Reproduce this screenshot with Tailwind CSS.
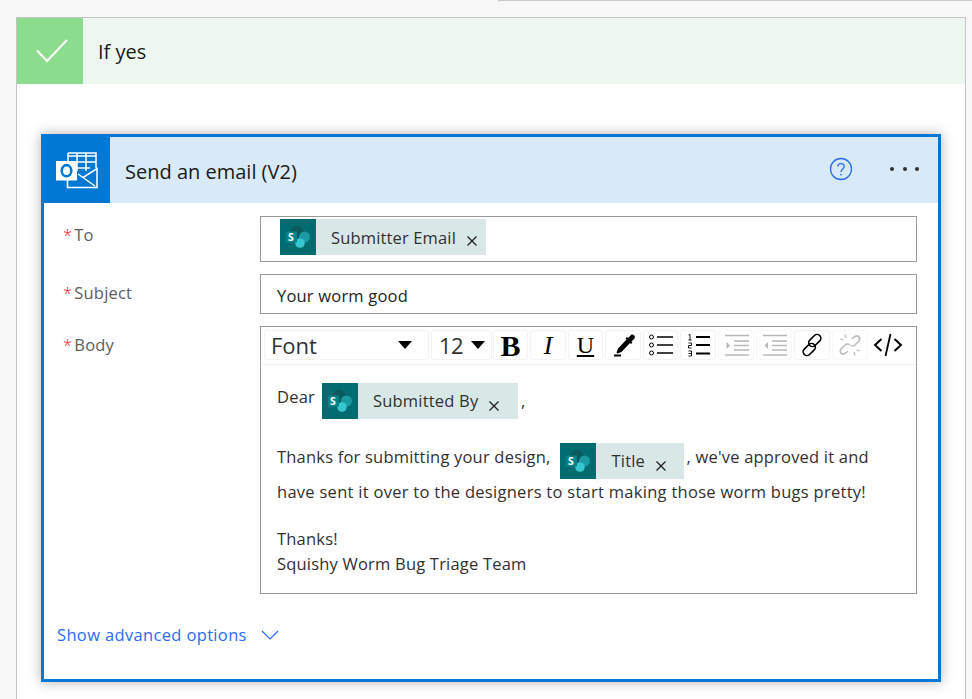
<!DOCTYPE html>
<html lang="en">
<head>
<meta charset="UTF-8">
<title>Send an email</title>
<script src="https://cdn.jsdelivr.net/npm/@tailwindcss/browser@4"></script>
</head>
<body class="bg-[#f8f8f8] font-['Open_Sans',sans-serif] text-[#323130] overflow-hidden">
<div class="h-[699px] w-[972px] overflow-hidden">
  <!-- top edge of the previous card -->
  <div class="ml-[498px] h-[2px] border-t border-l border-[#c8c8c8]"></div>
  <!-- If yes branch -->
  <section class="mt-[15px] ml-[16px] w-[950px] h-[690px] bg-white border border-[#c4c4c4]">
    <div class="flex h-[66px] bg-[#edf7ef]">
      <div class="w-[66px] bg-[#8bdc8d] flex items-center justify-center">
        <svg class="ml-[3px]" width="32" height="24" viewBox="0 0 32 24" fill="none" stroke="#fff" stroke-width="2.2"><path d="M1 11.500 L11 22 L31 1"/></svg>
      </div>
      <div class="pl-[15px] pt-[21px] text-[20px] leading-[26px] text-[#1b1a19]">If yes</div>
    </div>
    <!-- Action card -->
    <div class="mt-[50px] ml-[24px] w-[900px] h-[548px] border-[3px] border-[#0078d4] shadow-[0_0_12px_rgba(0,0,0,0.3)] bg-white">
      <div class="flex h-[66px] bg-[#d8e9f8] items-center">
        <div class="w-[66px] h-[66px] bg-[#0078d4] flex items-center justify-center">
          <svg width="42" height="37" viewBox="0 0 42 37" fill="none">
            <path d="M12 1 H40 V16 M21 1 V19 M30 1 V19 M12 1 V9 M12 4 H40 M21 10 H40 M21 16 H34" stroke="#fff" stroke-width="1.5"/>
            <path d="M11.500 28 V35.500 H41 V16.500 L27 25.500" stroke="#fff" stroke-width="1.500"/>
            <path d="M22 22 L39 34" stroke="#fff" stroke-width="1.500"/>
            <rect x="0" y="9" width="21" height="19.500" fill="#fff"/>
            <ellipse cx="10.500" cy="18.700" rx="4.800" ry="5.600" fill="none" stroke="#0078d4" stroke-width="2.600"/>
          </svg>
        </div>
        <div class="ml-[15px] mt-[3px] text-[20px] leading-[28px] text-[#1b1a19]">Send an email (V2)</div>
        <svg class="ml-auto -mt-[2px]" width="24" height="24" viewBox="0 0 24 24" fill="none">
          <circle cx="12" cy="12" r="10.500" stroke="#2a6df4" stroke-width="1.300"/>
          <path d="M8.800 9.400 C8.800 5.600 15.200 5.600 15.200 9.400 C15.200 12 12 12 12 15" stroke="#2a6df4" stroke-width="1.300"/>
          <circle cx="12" cy="17.600" r="0.900" fill="#2a6df4"/>
        </svg>
        <div class="ml-[37px] mr-[19px] -mt-[2px] flex gap-[8.5px]">
          <span class="w-[4px] h-[4px] rounded-full bg-[#323130]"></span>
          <span class="w-[4px] h-[4px] rounded-full bg-[#323130]"></span>
          <span class="w-[4px] h-[4px] rounded-full bg-[#323130]"></span>
        </div>
      </div>

      <div class="pt-[13px] pl-[19px] pr-[21px]">
        <!-- To -->
        <div class="flex">
          <div class="w-[197px] pt-[7px] text-[16.5px] leading-[24px] text-[#605e5c] tracking-[0.2px]"><span class="text-[#e81123] font-light mr-[2px]">*</span>To</div>
          <div class="w-[657px] h-[46px] border border-[#999] pl-[19px] pt-[2px]">
            <div class="inline-flex h-[36px] w-[206px] bg-[#d9e8e7]">
              <svg class="shrink-0" width="36" height="36" viewBox="0 0 36 36">
                <rect width="36" height="36" fill="#036c70"/>
                <circle cx="17" cy="13" r="6.500" fill="#0b5a5e"/>
                <circle cx="24.500" cy="18" r="5.500" fill="#1a9ba1"/>
                <circle cx="20" cy="24" r="4.800" fill="#37c6d0"/>
                <rect x="6" y="12.500" width="11" height="11" fill="#038387"/>
                <text x="8" y="22" font-size="10.500" font-weight="700" fill="#fff" font-family="Open Sans">S</text>
              </svg>
              <span class="ml-[15px] text-[16.5px] leading-[37px] tracking-[0.15px] text-[#323130] whitespace-nowrap">Submitter Email</span>
              <svg class="ml-[11px] mt-[17px]" width="10" height="10" viewBox="0 0 10 10" stroke="#201f1e" stroke-width="1.300"><path d="M0.500 0.500 L9.500 9.500 M9.500 0.500 L0.500 9.500"/></svg>
            </div>
          </div>
        </div>
        <!-- Subject -->
        <div class="flex mt-[12px]">
          <div class="w-[197px] pt-[7px] text-[16.5px] leading-[24px] text-[#605e5c] tracking-[0.2px]"><span class="text-[#e81123] font-light mr-[2px]">*</span>Subject</div>
          <div class="w-[657px] h-[40px] border border-[#999] pl-[16px] text-[16.5px] leading-[41px] text-[#201f1e] tracking-[0.2px]">Your worm good</div>
        </div>
        <!-- Body -->
        <div class="flex mt-[12px]">
          <div class="w-[197px] pt-[7px] text-[16.5px] leading-[24px] text-[#605e5c] tracking-[0.2px]"><span class="text-[#e81123] font-light mr-[2px]">*</span>Body</div>
          <div class="w-[657px] h-[268px] border border-[#999]">
            <div class="flex h-[38px] pl-[3px] pt-[3px] gap-[2px] border-b border-[#f1f1f1]">
              <div class="w-[165px] h-[30px] border border-[#f3f3f3] rounded-[3px] flex items-center pl-[6px]">
                <span class="text-[22px] mt-[1px]">Font</span>
                <span class="ml-auto mr-[16px] border-x-[7.5px] border-x-transparent border-t-[8px] border-t-black"></span>
              </div>
              <div class="w-[61px] h-[30px] border border-[#f3f3f3] rounded-[3px] flex items-center pl-[7px]">
                <span class="text-[22px] mt-[1px] tracking-[-0.6px]">12</span>
                <span class="ml-auto mr-[6px] border-x-[7.5px] border-x-transparent border-t-[8px] border-t-black"></span>
              </div>
              <div class="w-[35px] h-[30px] border border-[#f3f3f3] rounded-[3px] flex items-center justify-center font-['Liberation_Serif',serif] font-bold text-[30px] text-black -ml-[1px]">B</div>
              <div class="w-[36px] h-[30px] border border-[#f3f3f3] rounded-[3px] flex items-center justify-center font-['Liberation_Serif',serif] italic text-[26px] text-black">I</div>
              <div class="w-[35px] h-[30px] border border-[#f3f3f3] rounded-[3px] flex items-center justify-center font-['Liberation_Serif',serif] underline text-[24px] text-black">U</div>
              <div class="w-[36px] h-[30px] border border-[#f3f3f3] rounded-[3px] flex items-center justify-center">
                <svg class="ml-[4px]" width="24" height="24" viewBox="0 0 24 24"><path d="M18 2 C20 0.500 23 3.500 21.500 5.500 L18.500 8.500 L19.500 9.500 L18 11 L17 10 L8.500 19 L4.500 20.500 L3.500 19.500 L5 15.500 L13.500 6.500 L12.500 5.500 L14 4 L15 5 Z" fill="#000"/><rect x="1" y="21.500" width="7" height="2" fill="#000"/></svg>
              </div>
              <div class="w-[35px] h-[30px] border border-[#f3f3f3] rounded-[3px] flex items-center justify-center">
                <svg width="26" height="24" viewBox="0 0 26 24" fill="none" stroke="#000"><circle cx="3.500" cy="4" r="2"/><circle cx="3.500" cy="12" r="2"/><circle cx="3.500" cy="20" r="2"/><path d="M9 4 H25 M9 12 H25 M9 20 H25" stroke-width="1.400"/></svg>
              </div>
              <div class="w-[36px] h-[30px] border border-[#f3f3f3] rounded-[3px] flex items-center justify-center">
                <svg class="ml-[1px]" width="24" height="24" viewBox="0 0 24 24" fill="none" stroke="#000"><path d="M1.500 2 L3 1.500 V7 M1.500 7 H4.500 M1.500 10 H4.500 V12.500 H1.500 V15 H4.500 M1.500 18 H4.500 V23 H1.500 M1.500 20.500 H4.500" stroke-width="0.900"/><path d="M9 4 H23 M9 12 H23 M9 20.500 H23" stroke-width="2.200"/></svg>
              </div>
              <div class="w-[36px] h-[30px] border border-[#f8f8f8] rounded-[3px] flex items-center justify-center">
                <svg class="ml-[1px]" width="26" height="24" viewBox="0 0 26 24" fill="none" stroke="#b8b8b8"><path d="M1 2.500 H25 M10 8 H25 M10 12.500 H25 M10 17 H25 M1 22 H25" stroke-width="1.600"/><path d="M2.500 9 L6 12.500 L2.500 16 Z" fill="#b8b8b8" stroke="none"/></svg>
              </div>
              <div class="w-[36px] h-[30px] border border-[#f8f8f8] rounded-[3px] flex items-center justify-center">
                <svg class="ml-[1px]" width="26" height="24" viewBox="0 0 26 24" fill="none" stroke="#b8b8b8"><path d="M1 2.500 H25 M10 8 H25 M10 12.500 H25 M10 17 H25 M1 22 H25" stroke-width="1.600"/><path d="M6 9 L2.500 12.500 L6 16 Z" fill="#b8b8b8" stroke="none"/></svg>
              </div>
              <div class="w-[36px] h-[30px] border border-[#f3f3f3] rounded-[3px] flex items-center justify-center">
                <svg width="24" height="24" viewBox="0 0 24 24" fill="none" stroke="#000" stroke-width="1.600"><rect x="11" y="0.500" width="7.500" height="14" rx="3.700" transform="rotate(45 14.750 7.500)"/><rect x="5.500" y="9.500" width="7.500" height="14" rx="3.700" transform="rotate(45 9.250 16.500)"/></svg>
              </div>
              <div class="w-[36px] h-[30px] border border-[#f8f8f8] rounded-[3px] flex items-center justify-center">
                <svg width="24" height="24" viewBox="0 0 24 24" fill="none" stroke="#bdbdbd" stroke-width="1.600"><path d="M14 6 L17 3.500 C20 1.500 23 5 21 8 L17 12 C15.500 13.500 13.500 13 12.500 12 M10 18 L7 20.500 C4 22.500 1 19 3 16 L7 12 C8.500 10.500 10.500 11 11.500 12"/><path d="M7 1.500 L8 5 M2 6 L5.500 7 M17 22.500 L16 19 M22 18 L18.500 17" stroke-width="1.200"/></svg>
              </div>
              <div class="w-[35px] h-[30px] flex items-center justify-center">
                <svg width="30" height="24" viewBox="0 0 30 24" fill="none" stroke="#000" stroke-width="2"><path d="M8.500 6 L2 12 L8.500 18 M21.500 6 L28 12 L21.500 18"/><path d="M17.500 1 L12.500 23" stroke-width="1.800"/></svg>
              </div>
            </div>
            <div class="pl-[16px] pt-[18px] text-[16.5px] tracking-[0.2px] text-[#323130]">
              <div class="flex h-[36px] whitespace-nowrap">
                <span class="leading-[28px]">Dear</span>
                <div class="ml-[7px] flex w-[196px] h-[36px] bg-[#d9e8e7]">
                  <svg class="shrink-0" width="36" height="36" viewBox="0 0 36 36">
                    <rect width="36" height="36" fill="#036c70"/>
                    <circle cx="17" cy="13" r="6.500" fill="#0b5a5e"/>
                    <circle cx="24.500" cy="18" r="5.500" fill="#1a9ba1"/>
                    <circle cx="20" cy="24" r="4.800" fill="#37c6d0"/>
                    <rect x="6" y="12.500" width="11" height="11" fill="#038387"/>
                    <text x="8" y="22" font-size="10.500" font-weight="700" fill="#fff" font-family="Open Sans">S</text>
                  </svg>
                  <span class="ml-[15px] leading-[36px]">Submitted By</span>
                  <svg class="ml-[11px] mt-[18px]" width="10" height="10" viewBox="0 0 10 10" stroke="#201f1e" stroke-width="1.300"><path d="M0.500 0.500 L9.500 9.500 M9.500 0.500 L0.500 9.500"/></svg>
                </div>
                <span class="ml-[3px] leading-[36px]">,</span>
              </div>
              <div class="flex h-[36px] mt-[24px] whitespace-nowrap">
                <span class="leading-[28px]">Thanks for submitting your design,</span>
                <div class="ml-[9px] flex w-[124px] h-[36px] bg-[#d9e8e7]">
                  <svg class="shrink-0" width="36" height="36" viewBox="0 0 36 36">
                    <rect width="36" height="36" fill="#036c70"/>
                    <circle cx="17" cy="13" r="6.500" fill="#0b5a5e"/>
                    <circle cx="24.500" cy="18" r="5.500" fill="#1a9ba1"/>
                    <circle cx="20" cy="24" r="4.800" fill="#37c6d0"/>
                    <rect x="6" y="12.500" width="11" height="11" fill="#038387"/>
                    <text x="8" y="22" font-size="10.500" font-weight="700" fill="#fff" font-family="Open Sans">S</text>
                  </svg>
                  <span class="ml-[16px] leading-[36px]">Title</span>
                  <svg class="ml-[11px] mt-[18px]" width="10" height="10" viewBox="0 0 10 10" stroke="#201f1e" stroke-width="1.300"><path d="M0.500 0.500 L9.500 9.500 M9.500 0.500 L0.500 9.500"/></svg>
                </div>
                <span class="ml-[3px] leading-[28px]">, we've approved it and</span>
              </div>
              <p class="mt-[1px] leading-[24px] whitespace-nowrap tracking-[0.28px]">have sent it over to the designers to start making those worm bugs pretty!</p>
              <p class="mt-[22px] leading-[25px]">Thanks!<br>Squishy Worm Bug Triage Team</p>
            </div>
          </div>
        </div>
        <!-- Advanced options -->
        <div class="flex items-center mt-[29px] -ml-[6px] text-[#2a6df4]">
          <span class="text-[16.5px] leading-[24px] tracking-[0.35px]">Show advanced options</span>
          <svg class="ml-[14px]" width="18" height="10" viewBox="0 0 18 10" fill="none" stroke="#2a6df4" stroke-width="1.200"><path d="M1 1 L9 9 L17 1"/></svg>
        </div>
      </div>
    </div>
  </section>
</div>
</body>
</html>
